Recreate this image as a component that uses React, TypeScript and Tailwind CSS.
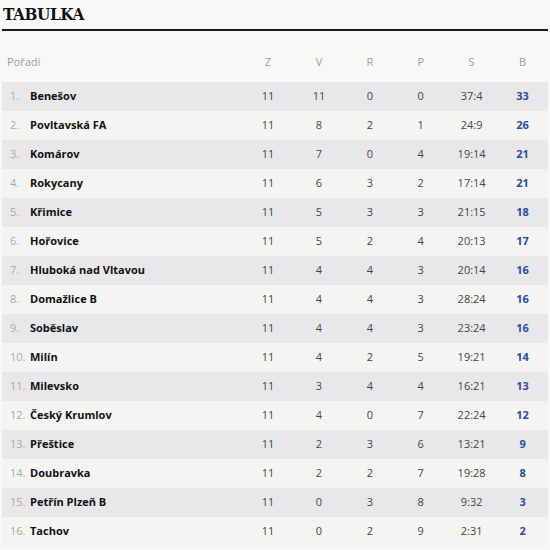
import React from "react";

const rows: [string, number, number, number, number, string, number][] = [
  ["Benešov", 11, 11, 0, 0, "37:4", 33],
  ["Povltavská FA", 11, 8, 2, 1, "24:9", 26],
  ["Komárov", 11, 7, 0, 4, "19:14", 21],
  ["Rokycany", 11, 6, 3, 2, "17:14", 21],
  ["Křimice", 11, 5, 3, 3, "21:15", 18],
  ["Hořovice", 11, 5, 2, 4, "20:13", 17],
  ["Hluboká nad Vltavou", 11, 4, 4, 3, "20:14", 16],
  ["Domažlice B", 11, 4, 4, 3, "28:24", 16],
  ["Soběslav", 11, 4, 4, 3, "23:24", 16],
  ["Milín", 11, 4, 2, 5, "19:21", 14],
  ["Milevsko", 11, 3, 4, 4, "16:21", 13],
  ["Český Krumlov", 11, 4, 0, 7, "22:24", 12],
  ["Přeštice", 11, 2, 3, 6, "13:21", 9],
  ["Doubravka", 11, 2, 2, 7, "19:28", 8],
  ["Petřín Plzeň B", 11, 0, 3, 8, "9:32", 3],
  ["Tachov", 11, 0, 2, 9, "2:31", 2],
];

export default function App() {
  return (
    <div
      className="w-[550px] h-[550px] bg-[#f8f9f6] overflow-hidden"
      style={{ fontFamily: '"Open Sans", "Noto Sans", sans-serif' }}
    >
      <div className="px-[2px]">
        <h1
          className="pl-[1px] pt-[2px] h-[29px] text-[17px] leading-[24px] font-bold text-[#111] tracking-[-0.4px]"
          style={{ fontFamily: '"DejaVu Serif Condensed", "DejaVu Serif", serif', fontStretch: "condensed" }}
        >
          TABULKA
        </h1>
        <div className="h-[2px] bg-[#1a1a1a] w-[546px]" />
        <div className="flex items-center h-[51px] pt-[12px] text-[11px] text-[#9a9a9a]">
          <div className="w-[241px] pl-[5px]">Pořadí</div>
          {["Z", "V", "R", "P", "S", "B"].map((h) => (
            <div key={h} className="w-[51px] text-center">
              {h}
            </div>
          ))}
        </div>
        <div className="w-[546px]">
          {rows.map((r, i) => (
            <div
              key={r[0]}
              className={`flex items-center h-[29px] text-[11px] ${
                i % 2 === 0 ? "bg-[#e8e8eb]" : "bg-[#f4f5f2]"
              }`}
            >
              <div className="w-[241px] flex items-center pl-[8px]">
                <span className="w-[20px] text-[#a8a8a8]">{i + 1}.</span>
                <span className="font-bold text-[#111]">{r[0]}</span>
              </div>
              <div className="w-[51px] text-center text-[#444]">{r[1]}</div>
              <div className="w-[51px] text-center text-[#444]">{r[2]}</div>
              <div className="w-[51px] text-center text-[#444]">{r[3]}</div>
              <div className="w-[51px] text-center text-[#444]">{r[4]}</div>
              <div className="w-[51px] text-center text-[#444]">{r[5]}</div>
              <div className="w-[51px] text-center font-bold text-[#2d4a9c]">{r[6]}</div>
            </div>
          ))}
        </div>
      </div>
    </div>
  );
}
